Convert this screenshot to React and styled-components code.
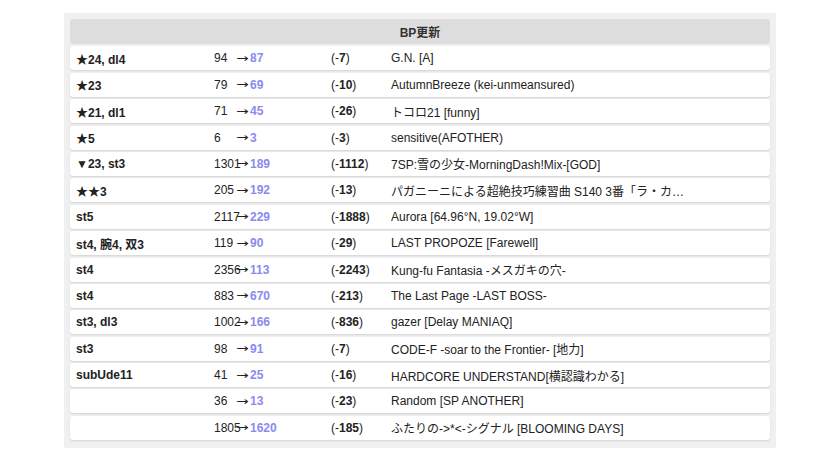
import React from "react";
import styled, { createGlobalStyle } from "styled-components";

const rows = [
  ["★24, dl4", "94", "87", "7", "G.N. [A]"],
  ["★23", "79", "69", "10", "AutumnBreeze (kei-unmeansured)"],
  ["★21, dl1", "71", "45", "26", "トコロ21 [funny]"],
  ["★5", "6", "3", "3", "sensitive(AFOTHER)"],
  ["▼23, st3", "1301", "189", "1112", "7SP:雪の少女-MorningDash!Mix-[GOD]"],
  ["★★3", "205", "192", "13", "パガニーニによる超絶技巧練習曲 S140 3番「ラ・カンパネラ」 [ANOTHER]"],
  ["st5", "2117", "229", "1888", "Aurora [64.96°N, 19.02°W]"],
  ["st4, 腕4, 双3", "119", "90", "29", "LAST PROPOZE [Farewell]"],
  ["st4", "2356", "113", "2243", "Kung-fu Fantasia -メスガキの穴-"],
  ["st4", "883", "670", "213", "The Last Page -LAST BOSS-"],
  ["st3, dl3", "1002", "166", "836", "gazer [Delay MANIAQ]"],
  ["st3", "98", "91", "7", "CODE-F -soar to the Frontier- [地力]"],
  ["subUde11", "41", "25", "16", "HARDCORE UNDERSTAND[横認識わかる]"],
  ["", "36", "13", "23", "Random [SP ANOTHER]"],
  ["", "1805", "1620", "185", "ふたりの->*<-シグナル [BLOOMING DAYS]"],
];

const Global = createGlobalStyle`
  body { margin: 0; background: #fff; font-family: "Liberation Sans", Arial, "Noto Sans CJK JP", sans-serif; font-size: 12px; color: #222; }
`;

const Panel = styled.div`
  width: 700px;
  margin: 13px 0 0 64px;
  padding: 6px 6px 8px;
  background: #f0f0f0;
  display: flex;
  flex-direction: column;
  gap: 2.4px;
`;

const Header = styled.div`
  height: 25px;
  background: #dddddd;
  border-radius: 3px;
  display: flex;
  align-items: center;
  justify-content: center;
  font-weight: bold;
  color: #333;
`;

const Row = styled.div`
  height: 24px;
  background: #fff;
  border-radius: 3px;
  box-shadow: 0 1px 2px rgba(0, 0, 0, 0.12);
  display: grid;
  grid-template-columns: 138px 117px 60px 1fr;
  align-items: center;
  padding-left: 6px;
`;

const Label = styled.span`
  font-weight: bold;
`;

const Change = styled.span`
  display: flex;
  align-items: center;
`;

const Before = styled.span`
  width: 22px;
  white-space: nowrap;
`;

const Arrow = styled.span`
  display: inline-block;
  width: 13px;
  font-family: "DejaVu Sans", sans-serif;
  font-size: 11px;
  transform: scaleX(1.35);
  transform-origin: left center;
`;

const After = styled.span`
  color: #8a8af0;
  font-weight: bold;
  margin-left: 1px;
`;

const Title = styled.span`
  white-space: nowrap;
  overflow: hidden;
  text-overflow: ellipsis;
  max-width: 305px;
`;

export default function App() {
  return (
    <>
      <Global />
      <Panel>
        <Header>BP更新</Header>
        {rows.map((r, i) => (
          <Row key={i}>
            <Label>{r[0]}</Label>
            <Change>
              <Before>{r[1]}</Before>
              <Arrow>→</Arrow>
              <After>{r[2]}</After>
            </Change>
            <span>
              (-<b>{r[3]}</b>)
            </span>
            <Title>{r[4]}</Title>
          </Row>
        ))}
      </Panel>
    </>
  );
}
